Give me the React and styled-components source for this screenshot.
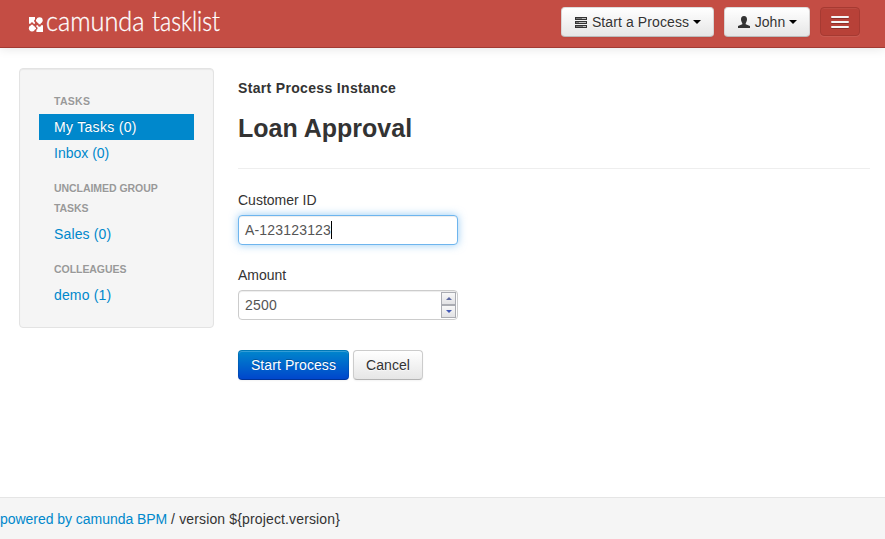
import React from 'react';
import styled, { createGlobalStyle, css } from 'styled-components';

const GlobalStyle = createGlobalStyle`
  *, *::before, *::after { box-sizing: border-box; }
  html, body { margin: 0; padding: 0; }
  body {
    font: 14px/20px "Liberation Sans", Arial, sans-serif;
    color: #333;
    background: #fff;
    overflow: hidden;
  }
`;

const Page = styled.div`
  display: flex;
  flex-direction: column;
  height: 539px;
`;

const Navbar = styled.header`
  display: flex;
  align-items: flex-start;
  height: 48px;
  padding: 7px 25px 0 28px;
  background: #c44d44;
  border-bottom: 1px solid #a23a33;
  box-shadow: 0 1px 10px rgba(0, 0, 0, 0.1);
`;

const Brand = styled.div`
  display: flex;
  margin-right: auto;
  color: #fff;
`;

const Mark = styled.svg`
  width: 15px;
  height: 15px;
  margin-top: 10px;
`;

const Wordmark = styled.svg`
  width: 180px;
  height: 40px;
  margin: -4px 0 0 2px;
  overflow: visible;
  font-family: Lato, sans-serif;
  font-size: 27px;
  font-weight: 300;
  fill: #fff;
  stroke: #fff;
  stroke-width: 0.3px;
`;

const Button = styled.button`
  display: inline-flex;
  align-items: center;
  justify-content: center;
  flex: none;
  width: ${(p) => p.$width}px;
  height: 30px;
  padding: 0;
  font: inherit;
  white-space: nowrap;
  border: 1px solid;
  border-radius: 4px;
  ${(p) =>
    p.$primary
      ? css`
          color: #fff;
          text-shadow: 0 -1px 0 rgba(0, 0, 0, 0.25);
          background: linear-gradient(#0088cc, #0044cc);
          border-color: rgba(0, 0, 0, 0.1) rgba(0, 0, 0, 0.1) rgba(0, 0, 0, 0.25);
          background-origin: border-box;
          box-shadow: inset 0 1px 0 rgba(255, 255, 255, 0.2), 0 1px 2px rgba(0, 0, 0, 0.05);
        `
      : css`
          color: #333;
          text-shadow: 0 1px 1px rgba(255, 255, 255, 0.75);
          background: linear-gradient(#fff, #e6e6e6);
          border-color: #ccc #ccc #b3b3b3;
          box-shadow: inset 0 1px 0 rgba(255, 255, 255, 0.2), 0 1px 2px rgba(0, 0, 0, 0.05);
        `}
`;

const NavButton = styled(Button)`
  margin-right: 10px;
  border-color: #ddd #d8d4d4 #bbb;
`;

const Glyph = styled.svg`
  width: 14px;
  height: 14px;
  margin-right: 4px;
  fill: #333;
`;

const Caret = styled.span`
  margin-left: 4px;
  border: 4px solid transparent;
  border-top-color: #000;
  border-bottom: 0;
`;

const MenuToggle = styled.button`
  display: flex;
  flex-direction: column;
  align-items: center;
  gap: 3px;
  width: 40px;
  height: 29px;
  padding: 8px 0 0;
  background: #b84138;
  border: 1px solid #a63a32;
  border-radius: 4px;
  box-shadow: inset 0 1px 0 rgba(255, 255, 255, 0.06), 0 1px 0 rgba(255, 255, 255, 0.075);
`;

const MenuBar = styled.span`
  width: 18px;
  height: 2px;
  flex: none;
  background: #f5f5f5;
  border-radius: 1px;
  box-shadow: 0 1px 0 rgba(0, 0, 0, 0.25);
`;

const Body = styled.main`
  display: flex;
  align-items: flex-start;
  flex: 1;
  padding: 20px 15px 0 19px;
`;

const Sidebar = styled.nav`
  flex: none;
  width: 195px;
  height: 260px;
  padding: 22px 19px 0;
  background: #f5f5f5;
  border: 1px solid #e3e3e3;
  border-radius: 4px;
  box-shadow: inset 0 1px 1px rgba(0, 0, 0, 0.05);
`;

const Group = styled.section`
  margin-bottom: 12px;
`;

const GroupTitle = styled.div`
  padding: 0 15px;
  margin-bottom: 3px;
  font-size: 10.5px;
  font-weight: bold;
  letter-spacing: ${(p) => p.$space}px;
  color: #999;
  text-transform: uppercase;
  text-shadow: 0 1px 0 rgba(255, 255, 255, 0.5);
`;

const NavItem = styled.a`
  display: block;
  padding: 3px 15px;
  color: ${(p) => (p.$active ? '#fff' : '#0088cc')};
  background: ${(p) => (p.$active ? '#0088cc' : 'transparent')};
  text-shadow: ${(p) => (p.$active ? '0 -1px 0 rgba(0, 0, 0, 0.2)' : 'none')};
`;

const Fit = styled.span`
  display: inline-block;
  letter-spacing: ${(p) => p.$space || 0}px;
  white-space: nowrap;
`;

const Content = styled.section`
  flex: 1;
  margin-left: 24px;
`;

const Subtitle = styled.div`
  padding-top: 10px;
  line-height: 20px;
  font-weight: bold;
`;

const Title = styled.h1`
  margin: 10px 0 0;
  font-size: 25px;
  line-height: 40px;
`;

const Divider = styled.hr`
  height: 1px;
  margin: 20px 0 21px;
  border: 0;
  background: #eee;
`;

const Field = styled.div`
  width: 220px;
  margin-bottom: 20px;
`;

const Label = styled.div`
  margin-bottom: 5px;
`;

const Input = styled.div`
  display: flex;
  align-items: center;
  height: 30px;
  padding: 0 1px 0 6px;
  letter-spacing: 0.18px;
  color: #555;
  background: #fff;
  border: 1px solid ${(p) => (p.$focused ? '#6eb5ee' : '#ccc')};
  border-radius: 4px;
  box-shadow: inset 0 1px 1px rgba(0, 0, 0, 0.075)${(p) => (p.$focused ? ', 0 0 8px rgba(82, 168, 236, 0.6)' : '')};
`;

const TextCursor = styled.span`
  width: 1px;
  height: 18px;
  background: #000;
`;

const Spinner = styled.span`
  display: flex;
  flex-direction: column;
  width: 15px;
  height: 26px;
  margin-left: auto;
`;

const Step = styled.span`
  display: flex;
  align-items: center;
  justify-content: center;
  flex: 1;
  background: linear-gradient(#f8f8f8, #e2e2e4);
  border: 1px solid #aaacb2;

  &::before {
    content: '';
    border: 3px solid transparent;
    ${(p) =>
      p.$up
        ? 'border-bottom-color: #5e6aa2; border-top: 0;'
        : 'border-top-color: #4359b5; border-bottom: 0;'}
  }
`;

const Actions = styled.div`
  display: flex;
  gap: 4px;
  padding-top: 10px;
`;

const Footer = styled.footer`
  height: 42px;
  padding-top: 11px;
  background: #f5f5f5;
  border-top: 1px solid #e5e5e5;
  white-space: nowrap;
`;

const FooterLink = styled.a`
  letter-spacing: -0.04px;
  color: #0088cc;
`;

const groups = [
  {
    title: 'Tasks',
    space: 0.3,
    items: [
      { text: 'My Tasks (0)', space: 0.3, active: true },
      { text: 'Inbox (0)', space: 0 },
    ],
  },
  { title: 'Unclaimed group tasks', space: -0.05, items: [{ text: 'Sales (0)', space: 0.15 }] },
  { title: 'Colleagues', space: -0.05, items: [{ text: 'demo (1)', space: 0.15 }] },
];

export default function App() {
  return (
    <Page>
      <GlobalStyle />
      <Navbar>
        <Brand>
          <Mark viewBox="0 0 15 15" fill="#fff">
            <path d="M1 0H7V2.5A1.6 1.6 0 0 0 7 5.4V6.8H5.5A1.5 1.5 0 0 0 2.5 6.8H1Z" />
            <circle cx="11.6" cy="3.3" r="3.1" />
            <path d="M8 2.4H10V4.4H8ZM10.6 5H12.6V7.3H10.6Z" />
            <circle cx="4" cy="11.3" r="3.1" />
            <path d="M5 10.4H8V12.2H5ZM3 7.7H5V9H3Z" />
            <path d="M15 15H8.4V12.8A1.6 1.6 0 0 0 8.4 9.7V8.2H10A1.5 1.5 0 0 0 13 8.2H15Z" />
          </Mark>
          <Wordmark viewBox="0 0 180 40">
            <text x="1" y="28" textLength="98.5" lengthAdjust="spacingAndGlyphs">camunda</text>
            <text x="107" y="28" textLength="68" lengthAdjust="spacingAndGlyphs">tasklist</text>
          </Wordmark>
        </Brand>
        <NavButton $width={153}>
          <Glyph viewBox="0 0 14 14" shapeRendering="crispEdges">
            <path d="M1 2h12v3H1zM1 6h12v3H1zM1 10h12v3H1z" />
            <path fill="#bbb" d="M8 3h4v1H8zM5 7h7v1H5zM9 11h3v1H9z" />
            <path fill="#777" d="M2 3h6v1H2zM2 7h3v1H2zM2 11h7v1H2z" />
          </Glyph>
          <Fit $space={0.1}>Start a Process</Fit>
          <Caret />
        </NavButton>
        <NavButton $width={86}>
          <Glyph viewBox="0 0 14 14">
            <path d="M7 1C4.8 1 4 2.3 4 4.4C4 6 4.8 7 5.3 8.2V9.3L1 11V13H13V11L8.7 9.3V8.2C9.2 7 10 6 10 4.4C10 2.3 9.2 1 7 1Z" />
          </Glyph>
          <Fit>John</Fit>
          <Caret />
        </NavButton>
        <MenuToggle aria-label="Menu">
          <MenuBar />
          <MenuBar />
          <MenuBar />
        </MenuToggle>
      </Navbar>
      <Body>
        <Sidebar>
          {groups.map((group) => (
            <Group key={group.title}>
              <GroupTitle $space={group.space}>{group.title}</GroupTitle>
              {group.items.map((item) => (
                <NavItem key={item.text} $active={item.active}>
                  <Fit $space={item.space}>{item.text}</Fit>
                </NavItem>
              ))}
            </Group>
          ))}
        </Sidebar>
        <Content>
          <Subtitle><Fit $space={0.33}>Start Process Instance</Fit></Subtitle>
          <Title>Loan Approval</Title>
          <Divider />
          <Field>
            <Label>Customer ID</Label>
            <Input $focused>
              A-123123123
              <TextCursor />
            </Input>
          </Field>
          <Field>
            <Label>Amount</Label>
            <Input>
              2500
              <Spinner>
                <Step $up />
                <Step />
              </Spinner>
            </Input>
          </Field>
          <Actions>
            <Button $primary $width={111}><Fit $space={0.08}>Start Process</Fit></Button>
            <Button $width={70}><Fit $space={0.08}>Cancel</Fit></Button>
          </Actions>
        </Content>
      </Body>
      <Footer>
        <FooterLink>powered by camunda BPM</FooterLink>{' '}
        <Fit $space={0.14}>/ version {'${project.version}'}</Fit>
      </Footer>
    </Page>
  );
}
